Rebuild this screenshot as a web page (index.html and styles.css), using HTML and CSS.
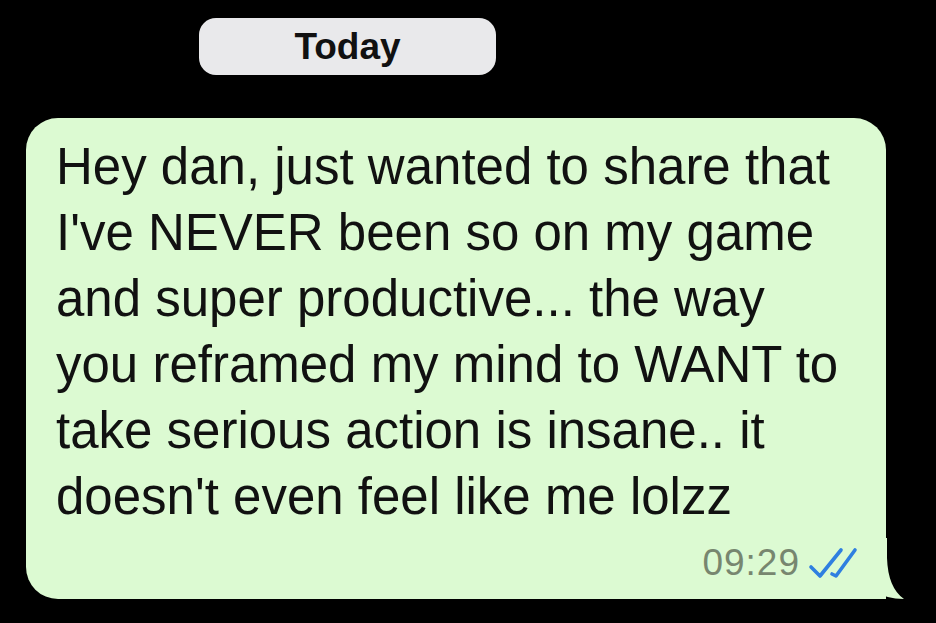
FILE: index.html
```html
<!DOCTYPE html>
<html>
<head>
    <meta charset="utf-8">
    <title>Chat</title>
    <link rel="stylesheet" href="styles.css">
</head>
<body>
    <div class="day">
        <span class="day-pill">Today</span>
    </div>

    <div class="bubble">
        <!-- little tail at the bottom right -->
        <svg class="tail" width="60" height="62" viewBox="0 0 60 62">
            <path d="M0 0 L43 0 L43 20 Q44 50 60 61 Q42 61 31 53 Q27 60 18 60 L0 60 Z" fill="#dcfad2"/>
        </svg>
        <p class="msg">Hey dan, just wanted to share that<br>I've NEVER been so on my game<br>and super productive... the way<br>you reframed my mind to WANT to<br>take serious action is insane.. it<br>doesn't even feel like me lolzz</p>
        <div class="meta">
            <span class="time">09:29</span>
            <svg class="ticks" width="50" height="34" viewBox="0 0 50 34">
                <path d="M3 21 L12 30 L33 4" fill="none" stroke="#2f7fe0" stroke-width="3.6" stroke-linecap="round" stroke-linejoin="round"/>
                <path d="M24 28 L28 30 L47 4" fill="none" stroke="#2f7fe0" stroke-width="3.6" stroke-linecap="round" stroke-linejoin="round"/>
            </svg>
        </div>
    </div>
</body>
</html>
```

FILE: styles.css
```css
body{
    background-color: black;
    margin: 0;
    padding: 0;
    overflow: hidden;
    font-family: "Liberation Sans", Arial, sans-serif;}

.day{
    padding: 18px 0 0 199px;
    height: 57px;}

.day-pill{
    display: flex;
    align-items: center;
    justify-content: center;
    width: 297px;
    height: 57px;
    background-color: #e9e9eb;
    border-radius: 17px;
    color: #111;
    font-size: 37px;
    font-weight: bold;}

.bubble{
    position: relative;
    margin: 43px 0 0 26px;
    width: 860px;
    height: 481px;
    box-sizing: border-box;
    padding: 16px 28px 0 30px;
    background-color: #dcfad2;
    border-radius: 32px 32px 0 32px;}

.msg{
    margin: 0;
    color: #111;
    font-size: 51px;
    line-height: 66px;
    white-space: nowrap;}

.meta{
    position: relative; /* paint above the tail */
    display: flex;
    justify-content: flex-end;
    align-items: center;
    gap: 8px;
    margin-top: 12px;}

.time{
    color: #77866f;
    font-size: 37px;
    letter-spacing: 1px;}

.ticks{
    display: block;}

.tail{
    position: absolute;
    right: -18px;
    bottom: -1px;}
```
